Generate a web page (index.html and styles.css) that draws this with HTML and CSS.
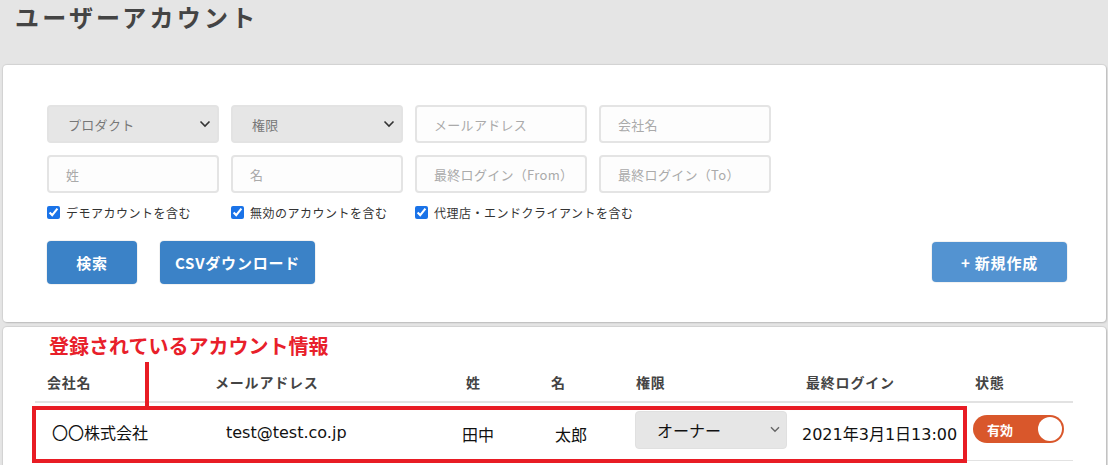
FILE: index.html
```html
<!DOCTYPE html>
<html lang="ja">
<head>
<meta charset="utf-8">
<link rel="stylesheet" href="styles.css">
</head>
<body>
<h1 class="title">ユーザーアカウント</h1>

<section class="card filter-card">
  <div class="filter-grid">
    <div class="field select-field"><span>プロダクト</span><svg class="chev" width="12" height="8" viewBox="0 0 12 8"><path d="M1.5 1.5 L6 6 L10.5 1.5" fill="none" stroke="#333" stroke-width="1.6"/></svg></div>
    <div class="field select-field"><span>権限</span><svg class="chev" width="12" height="8" viewBox="0 0 12 8"><path d="M1.5 1.5 L6 6 L10.5 1.5" fill="none" stroke="#333" stroke-width="1.6"/></svg></div>
    <div class="field input-field"><span>メールアドレス</span></div>
    <div class="field input-field"><span>会社名</span></div>
    <div class="field input-field"><span>姓</span></div>
    <div class="field input-field"><span>名</span></div>
    <div class="field input-field"><span>最終ログイン（From）</span></div>
    <div class="field input-field"><span>最終ログイン（To）</span></div>
  </div>
  <div class="check-grid">
    <label class="check"><input type="checkbox" checked>デモアカウントを含む</label>
    <label class="check"><input type="checkbox" checked>無効のアカウントを含む</label>
    <label class="check"><input type="checkbox" checked>代理店・エンドクライアントを含む</label>
  </div>
  <div class="actions">
    <button class="btn btn-search">検索</button>
    <button class="btn btn-csv">CSVダウンロード</button>
    <button class="btn btn-new">+ 新規作成</button>
  </div>
</section>

<section class="card list-card">
  <div class="note">登録されているアカウント情報</div>
  <table class="accounts">
    <colgroup>
      <col class="c1"><col class="c2"><col class="c3"><col class="c4"><col class="c5"><col class="c6"><col class="c7">
    </colgroup>
    <thead>
      <tr><th>会社名</th><th>メールアドレス</th><th>姓</th><th>名</th><th>権限</th><th>最終ログイン</th><th>状態</th></tr>
    </thead>
    <tbody>
      <tr>
        <td class="d-company">〇〇株式会社</td>
        <td class="d-mail">test@test.co.jp</td>
        <td class="d-last">田中</td>
        <td class="d-first">太郎</td>
        <td class="d-role"><div class="role-select"><span>オーナー</span><svg class="chev" width="10" height="7" viewBox="0 0 10 7"><path d="M1 1.2 L5 5.2 L9 1.2" fill="none" stroke="#666" stroke-width="1.4"/></svg></div></td>
        <td class="d-date">2021年3月1日13:00</td>
        <td class="d-state"><div class="toggle"><span>有効</span><i class="knob"></i></div></td>
      </tr>
    </tbody>
  </table>
  <div class="red-line"></div>
  <div class="red-box"></div>
</section>
</body>
</html>
```

FILE: styles.css
```css
* { box-sizing: border-box; }
html, body { margin: 0; padding: 0; }
body {
  background: #e5e5e5;
  font-family: "Noto Sans CJK JP", "Noto Sans", sans-serif;
  color: #333;
  width: 1108px;
  height: 465px;
  overflow: hidden;
}
.title {
  margin: 0;
  padding: 0 0 0 15px;
  font-size: 24px;
  line-height: 34px;
  font-weight: bold;
  color: #444;
  letter-spacing: 3.2px;
}
.card {
  background: #fff;
  margin: 0 2px 0 3px;
  border-radius: 4px;
  box-shadow: 0 0 1px 1px rgba(0,0,0,0.08), 1px 1px 2px rgba(0,0,0,0.12);
}
.filter-card {
  margin-top: 31px;
  height: 257px;
  padding: 40px 39px 0 44px;
}
.filter-grid {
  display: grid;
  grid-template-columns: repeat(4, 172px);
  column-gap: 12px;
  row-gap: 12px;
}
.field {
  height: 38px;
  border-radius: 4px;
  display: flex;
  align-items: center;
  font-size: 13px;
  padding-left: 17px;
  letter-spacing: 0.3px;
}
.select-field {
  background: #e6e6e6;
  border: 2px solid #e3e3e3;
  color: #777;
  justify-content: space-between;
  padding-right: 6px;
  padding-left: 19px;
}
.input-field {
  background: #fdfdfd;
  border: 2px solid #e4e4e4;
  color: #aaa;
}
.check-grid {
  display: grid;
  grid-template-columns: repeat(4, 172px);
  column-gap: 12px;
  margin-top: 10px;
}
.check {
  display: flex;
  align-items: center;
  font-size: 12px;
  color: #333;
  height: 18px;
  letter-spacing: 0.5px;
  white-space: nowrap;
}
.check input {
  width: 13px;
  height: 13px;
  margin: 0 6px 0 0;
  accent-color: #1a73e8;
}
.actions {
  display: flex;
  align-items: flex-start;
  margin-top: 20px;
}
.btn {
  border: none;
  border-radius: 4px;
  color: #fff;
  font-family: "Noto Sans CJK JP", "Noto Sans", sans-serif;
  font-weight: bold;
  font-size: 15px;
  letter-spacing: 0.8px;
  height: 43px;
  padding: 0;
  box-shadow: 0 0 0 1px rgba(0,0,0,0.05);
}
.btn-search { width: 90px; background: #3b82c7; }
.btn-csv { width: 155px; margin-left: 23px; background: #3b82c7; }
.btn-new { width: 135px; height: 40px; margin-left: auto; margin-top: 1px; background: #5393d1; }

.list-card {
  position: relative;
  margin-top: 5px;
  height: 150px;
  padding: 5px 0 0 0;
}
.note {
  color: #e8202a;
  font-size: 20px;
  font-weight: bold;
  line-height: 28px;
  padding-left: 46px;
  letter-spacing: 0px;
}
.accounts {
  border-collapse: collapse;
  margin: 2px 0 0 32px;
  table-layout: fixed;
  width: 1038px;
}
col.c1 { width: 168px; }
col.c2 { width: 251px; }
col.c3 { width: 85px; }
col.c4 { width: 85px; }
col.c5 { width: 170px; }
col.c6 { width: 169px; }
col.c7 { width: 110px; }
.accounts th {
  text-align: left;
  font-size: 14px;
  font-weight: bold;
  color: #444;
  height: 40px;
  padding: 0 0 0 12px;
  border-bottom: 2px solid #e2e2e2;
  letter-spacing: 0.8px;
}
.accounts td {
  height: 58px;
  font-family: "DejaVu Sans", "Noto Sans CJK JP", sans-serif;
  font-size: 16px;
  color: #111;
  padding: 0;
  border-bottom: 1px solid #e2e2e2;
  white-space: nowrap;
}
.d-company { padding-left: 17px !important; padding-top: 2px !important; }
.d-mail { padding-left: 23px !important; padding-top: 2px !important; }
.d-last { padding-left: 8px !important; padding-top: 6px !important; }
.d-first { padding-left: 16px !important; padding-top: 6px !important; }
.d-role { padding-left: 11px !important; }
.d-date { padding-left: 8px !important; padding-top: 4px !important; }
.d-state { padding-left: 10px !important; }
.role-select {
  width: 152px;
  height: 38px;
  background: #e6e6e6;
  border: 1px solid #e0e0e0;
  border-radius: 4px;
  display: flex;
  align-items: center;
  justify-content: space-between;
  padding: 0 6px 0 21px;
  font-family: "Noto Sans CJK JP", sans-serif;
  font-size: 16px;
  color: #111;
  margin-top: -3px;
}
.toggle {
  position: relative;
  width: 91px;
  height: 28px;
  border-radius: 14px;
  background: #d9572b;
  display: flex;
  align-items: center;
  padding-left: 14px;
  color: #fff;
  font-family: "Noto Sans CJK JP", sans-serif;
  font-size: 13px;
  font-weight: bold;
  margin-top: -4px;
}
.knob {
  position: absolute;
  right: 2px;
  top: 2px;
  width: 24px;
  height: 24px;
  border-radius: 50%;
  background: #fff;
}
.red-line {
  position: absolute;
  left: 142px;
  top: 35px;
  width: 4px;
  height: 46px;
  background: #e81c24;
}
.red-box {
  position: absolute;
  left: 29px;
  top: 79px;
  width: 935px;
  height: 57px;
  border: 4px solid #e81c24;
}
```
